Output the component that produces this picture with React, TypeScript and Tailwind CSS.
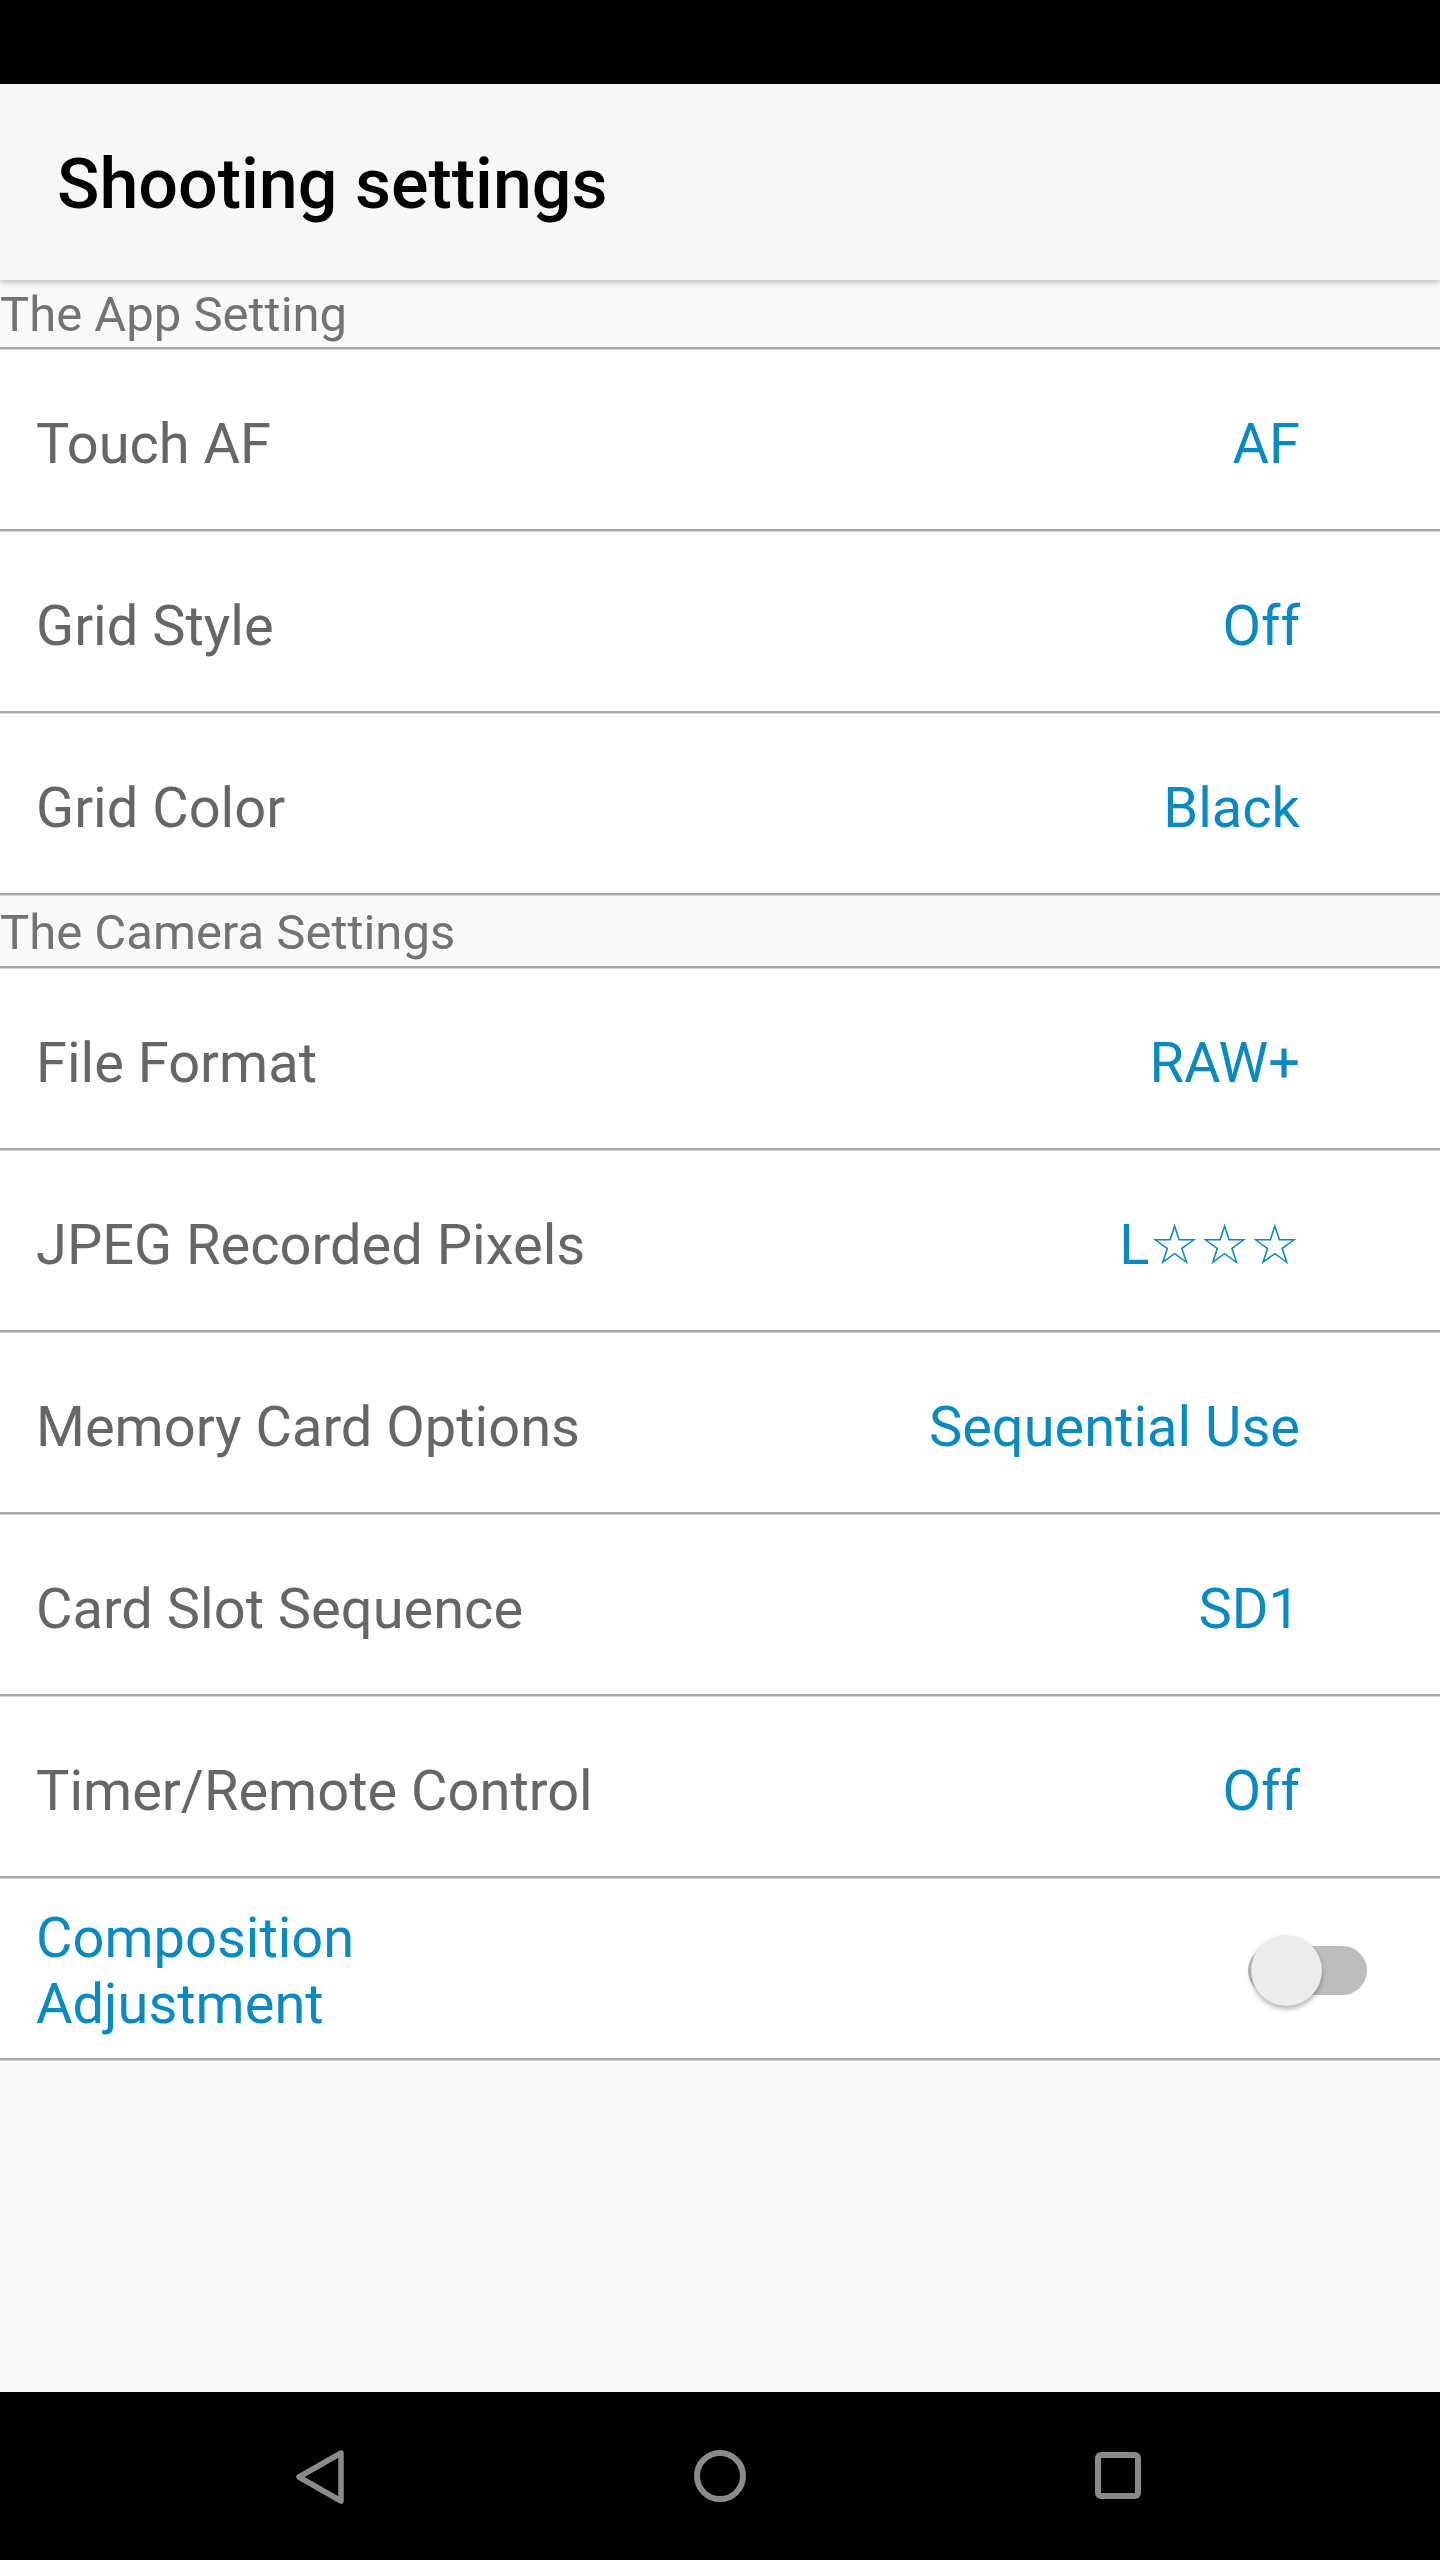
import React from "react";

const FONT = { fontFamily: "Roboto, 'DejaVu Sans', 'Noto Sans', sans-serif" };

type Row = { label: string; value: string };

const appRows: Row[] = [
  { label: "Touch AF", value: "AF" },
  { label: "Grid Style", value: "Off" },
  { label: "Grid Color", value: "Black" },
];

const cameraRows: Row[] = [
  { label: "File Format", value: "RAW+" },
  { label: "JPEG Recorded Pixels", value: "L☆☆☆" },
  { label: "Memory Card Options", value: "Sequential Use" },
  { label: "Card Slot Sequence", value: "SD1" },
  { label: "Timer/Remote Control", value: "Off" },
];

function Divider() {
  return (
    <div className="flex flex-col">
      <div className="h-[2px] bg-[#a9a9a9]" />
      <div className="h-[1px] bg-[#d4d4d4]" />
    </div>
  );
}

function SectionHeader({ title, tall }: { title: string; tall?: boolean }) {
  return (
    <div className="flex flex-col bg-[#fafafa]">
      <div
        className={
          tall
            ? "h-[70px] flex items-center pt-[3px] text-[49px] leading-none text-[#737373]"
            : "h-[67px] flex items-center pt-[1px] text-[49px] leading-none text-[#737373]"
        }
      >
        {title}
      </div>
      <Divider />
    </div>
  );
}

function SettingRow({ label, value }: Row) {
  return (
    <div className="flex flex-col bg-white">
      <div className="h-[179px] flex items-center justify-between pl-[36px] pr-[140px] pt-[8px] text-[56px] leading-none">
        <span className="text-[#666666]">{label}</span>
        <span className="text-[#0a8ac3]">{value}</span>
      </div>
      <Divider />
    </div>
  );
}

function ToggleRow() {
  return (
    <div className="flex flex-col bg-white">
      <div className="h-[179px] flex items-center justify-between pl-[36px] pr-[73px] pt-[4px]">
        <span className="w-[420px] text-[56px] leading-[66px] text-[#0a8ac3]">
          Composition Adjustment
        </span>
        <div className="relative w-[119px] h-[49px] rounded-full bg-[#bdbdbd]">
          <div className="absolute left-[3px] top-[-11px] w-[71px] h-[71px] rounded-full bg-[#ececec] shadow-[0_3px_5px_rgba(0,0,0,0.3)]" />
        </div>
      </div>
      <Divider />
    </div>
  );
}

function NavBar() {
  return (
    <div className="h-[168px] bg-black flex items-center justify-center">
      <div className="w-[399px] flex justify-center">
        <svg width="60" height="60" viewBox="0 0 60 60">
          <path
            d="M50 7 L8 31 L50 55 Z"
            fill="none"
            stroke="#8a8a8a"
            strokeWidth="5.5"
            strokeLinejoin="round"
          />
        </svg>
      </div>
      <div className="w-[399px] flex justify-center">
        <svg width="60" height="60" viewBox="0 0 60 60">
          <circle cx="30" cy="30" r="23" fill="none" stroke="#8a8a8a" strokeWidth="6" />
        </svg>
      </div>
      <div className="w-[399px] flex justify-center">
        <svg width="60" height="60" viewBox="0 0 60 60">
          <rect
            x="9"
            y="9"
            width="40"
            height="41"
            rx="3"
            fill="none"
            stroke="#8a8a8a"
            strokeWidth="6"
          />
        </svg>
      </div>
    </div>
  );
}

export default function App() {
  return (
    <div className="w-[1440px] h-[2560px] flex flex-col bg-[#fafafa]" style={FONT}>
      <div className="h-[84px] bg-black" />
      <div className="relative z-10 h-[196px] bg-[#f7f7f7] flex items-center pl-[57px] pt-[4px] shadow-[0_3px_6px_rgba(0,0,0,0.22)]">
        <h1 className="text-[70px] leading-none font-medium text-black">Shooting settings</h1>
      </div>
      <div className="flex flex-col">
        <SectionHeader title="The App Setting" />
        {appRows.map((r) => (
          <SettingRow key={r.label} {...r} />
        ))}
        <SectionHeader title="The Camera Settings" tall />
        {cameraRows.map((r) => (
          <SettingRow key={r.label} {...r} />
        ))}
        <ToggleRow />
      </div>
      <div className="flex-1 bg-[#fafafa]" />
      <NavBar />
    </div>
  );
}
